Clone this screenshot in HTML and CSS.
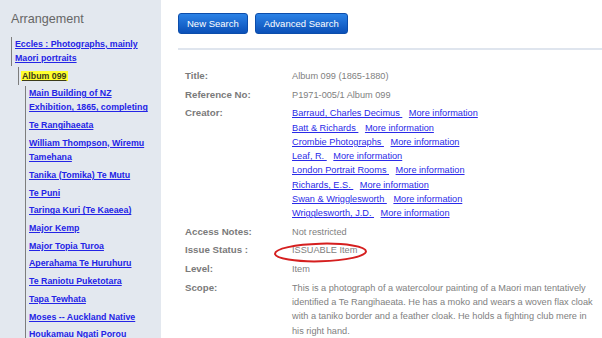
FILE: index.html
```html
<!DOCTYPE html>
<html>
<head>
<meta charset="utf-8">
<title>Album 099</title>
<link rel="stylesheet" href="styles.css">
</head>
<body>
<div class="page">
  <aside class="sidebar">
    <h2 class="side-title">Arrangement</h2>
    <div class="tree">
      <div class="node lvl1"><a href="#">Eccles : Photographs, mainly Maori portraits</a></div>
      <div class="node lvl2"><a href="#" class="current">Album 099</a></div>
      <ul class="lvl3">
        <li><a href="#">Main Building of NZ Exhibition, 1865, completing</a></li>
        <li><a href="#">Te Rangihaeata</a></li>
        <li><a href="#">William Thompson, Wiremu Tamehana</a></li>
        <li><a href="#">Tanika (Tomika) Te Mutu</a></li>
        <li><a href="#">Te Puni</a></li>
        <li><a href="#">Taringa Kuri (Te Kaeaea)</a></li>
        <li><a href="#">Major Kemp</a></li>
        <li><a href="#">Major Topia Turoa</a></li>
        <li><a href="#">Aperahama Te Huruhuru</a></li>
        <li><a href="#">Te Raniotu Puketotara</a></li>
        <li><a href="#">Tapa Tewhata</a></li>
        <li><a href="#">Moses -- Auckland Native</a></li>
        <li><a href="#">Houkamau Ngati Porou</a></li>
      </ul>
    </div>
  </aside>
  <main class="content">
    <div class="actions">
      <button class="btn" type="button">New Search</button>
      <button class="btn" type="button">Advanced Search</button>
    </div>
    <hr class="rule">
    <dl class="details">
      <dt>Title:</dt>
      <dd>Album 099 (1865-1880)</dd>
      <dt>Reference No:</dt>
      <dd>P1971-005/1 Album 099</dd>
      <dt>Creator:</dt>
      <dd class="creators">
        <div><a href="#">Barraud, Charles Decimus&nbsp;</a> <a href="#" class="more">More information</a></div>
        <div><a href="#">Batt &amp; Richards&nbsp;</a> <a href="#" class="more">More information</a></div>
        <div><a href="#">Crombie Photographs&nbsp;</a> <a href="#" class="more">More information</a></div>
        <div><a href="#">Leaf, R.&nbsp;</a> <a href="#" class="more">More information</a></div>
        <div><a href="#">London Portrait Rooms&nbsp;</a> <a href="#" class="more">More information</a></div>
        <div><a href="#">Richards, E.S.&nbsp;</a> <a href="#" class="more">More information</a></div>
        <div><a href="#">Swan &amp; Wrigglesworth&nbsp;</a> <a href="#" class="more">More information</a></div>
        <div><a href="#">Wrigglesworth, J.D.&nbsp;</a> <a href="#" class="more">More information</a></div>
      </dd>
      <dt>Access Notes:</dt>
      <dd>Not restricted</dd>
      <dt>Issue Status :</dt>
      <dd><span class="status">ISSUABLE Item<svg class="circle" width="96" height="22" viewBox="0 0 96 22"><ellipse cx="47.5" cy="10.5" rx="45.5" ry="8.8" fill="none" stroke="#d51f1f" stroke-width="2" transform="rotate(-1.5 47.5 10.5)"/></svg></span></dd>
      <dt>Level:</dt>
      <dd>Item</dd>
      <dt>Scope:</dt>
      <dd>This is a photograph of a watercolour painting of a Maori man tentatively identified a Te Rangihaeata. He has a moko and wears a woven flax cloak with a taniko border and a feather cloak. He holds a fighting club mere in his right hand.</dd>
    </dl>
  </main>
</div>
</body>
</html>
```

FILE: styles.css
```css
* {
  box-sizing: border-box;
}

html,
body {
  margin: 0;
  padding: 0;
}

body {
  width: 602px;
  height: 338px;
  overflow: hidden;
  background: #ffffff;
  font-family: "Liberation Sans", Arial, sans-serif;
}

.page {
  display: flex;
  height: 338px;
}

/* Sidebar */
.sidebar {
  width: 161px;
  flex: none;
  background: #e3e8ef;
  padding: 12px 8px 0 11px;
  overflow: hidden;
}

.side-title {
  margin: 0 0 9.8px;
  font-size: 12.6px;
  line-height: 15px;
  font-weight: normal;
  color: #666666;
}

.tree {
  font-size: 8.8px;
  line-height: 14.4px;
  font-weight: bold;
}

.tree a {
  color: #2424e6;
  text-decoration: underline;
}

.node {
  border-left: 1px solid #7d7d7d;
}

.lvl1 {
  padding-left: 3px;
  margin-bottom: 1.5px;
}

.lvl2 {
  margin-left: 7px;
  padding: 1.5px 0 2px 2px;
  margin-bottom: 1px;
}

.tree a.current {
  background: #ffff2e;
  color: #3b3b1a;
  padding: 0 1px;
}

.lvl3 {
  list-style: none;
  margin: 0 0 0 14px;
  padding: 0 0 0 3px;
  border-left: 1px solid #7d7d7d;
}

.lvl3 li {
  margin-bottom: 3.3px;
}

/* Main content */
.content {
  flex: 1;
  padding: 13px 0 0 17px;
}

.actions {
  display: flex;
  gap: 7px;
}

.btn {
  height: 21px;
  padding: 0 8px;
  font-family: "Liberation Sans", Arial, sans-serif;
  font-size: 9.5px;
  color: #ffffff;
  background: linear-gradient(#2b82e6, #0b50b8);
  border: 1px solid #0c4dab;
  border-radius: 3px;
}

.rule {
  margin: 14px 0 0;
  border: 0;
  height: 2px;
  background: #dfe5ee;
}

.details {
  display: grid;
  grid-template-columns: 107px 306px;
  margin: 17px 0 0;
  padding-left: 7px;
  font-size: 9.2px;
  line-height: 14.4px;
}

.details dt,
.details dd {
  margin: 0;
  padding: 2.1px 0;
}

.details dt {
  font-weight: bold;
  font-size: 9.7px;
  color: #7a7a7a;
}

.details dd {
  color: #808080;
}

.details a {
  color: #2a2ae8;
  text-decoration: underline;
}

.creators {
  line-height: 14.3px;
}

.more {
  margin-left: 4px;
}

.status {
  position: relative;
}

.circle {
  position: absolute;
  left: -19px;
  top: -3.5px;
}
```
